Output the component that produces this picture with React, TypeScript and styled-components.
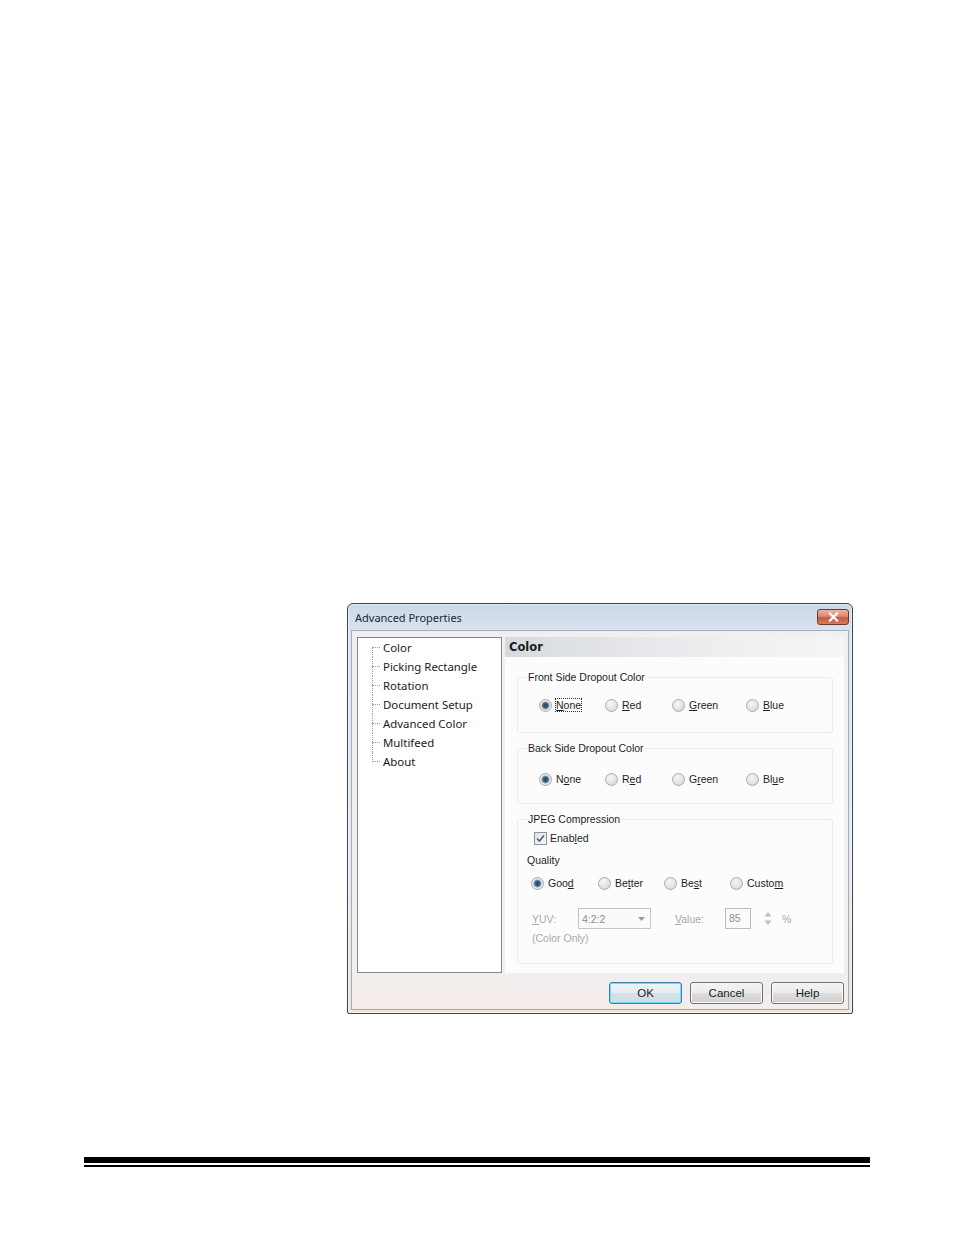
import React from "react";
import styled, { createGlobalStyle } from "styled-components";

const GlobalStyle = createGlobalStyle`
  html, body {
    margin: 0;
    padding: 0;
    background: #fff;
  }
  body {
    font-family: "Liberation Sans", Arial, sans-serif;
  }
  * {
    box-sizing: border-box;
  }
`;

const Page = styled.div`
  width: 954px;
  min-height: 1235px;
  display: flex;
  flex-direction: column;
`;

const DialogSlot = styled.div`
  padding: 603px 0 0 347px;
`;

const Window = styled.div`
  width: 506px;
  height: 411px;
  border: 1px solid #3f444c;
  border-radius: 6px 6px 2px 2px;
  background: linear-gradient(180deg, #cad8e9 0%, #dbe5f1 8%, #e3eaf3 60%, #efe3e0 100%);
  box-shadow: inset 0 0 0 1px rgba(255, 255, 255, 0.55);
  display: flex;
  flex-direction: column;
`;

const TitleBar = styled.div`
  height: 26px;
  display: flex;
  align-items: center;
  justify-content: space-between;
  padding: 0 3px 0 7px;
`;

const Title = styled.span`
  font-family: "Noto Sans", "Liberation Sans", sans-serif;
  font-size: 11px;
  color: #1c2733;
`;

const CloseButton = styled.div`
  width: 32px;
  height: 16px;
  margin-top: -1px;
  border: 1px solid #6b3a30;
  border-radius: 3px;
  background: linear-gradient(180deg, #eab4a2 0%, #dd8a70 45%, #c9593c 55%, #d67b5f 100%);
  display: flex;
  align-items: center;
  justify-content: center;
`;

const Client = styled.div`
  margin: 0 3px 3px 3px;
  flex: 1;
  border: 1px solid #a6adb6;
  background: linear-gradient(180deg, #f0f0f0 0%, #f0f0f0 88%, #f4ece9 100%);
  padding: 6px 4px 5px 5px;
  display: flex;
  flex-direction: column;
`;

const Main = styled.div`
  display: flex;
  gap: 3px;
  height: 336px;
`;

const Tree = styled.ul`
  width: 145px;
  margin: 0;
  padding: 0;
  list-style: none;
  border: 1px solid #828790;
  background: #fff;
`;

const TreeItem = styled.li<{ $first?: boolean; $last?: boolean }>`
  position: relative;
  height: 19px;
  line-height: 19px;
  padding-left: 25px;
  font-family: "Noto Sans", "Liberation Sans", sans-serif;
  font-size: 11.4px;
  color: #1a1a1a;

  &::before {
    content: "";
    position: absolute;
    left: 14px;
    top: 9px;
    width: 8px;
    border-top: 1px dotted #9a9a9a;
  }

  &::after {
    content: "";
    position: absolute;
    left: 14px;
    top: ${({ $first }) => ($first ? "9px" : "0")};
    height: ${({ $first, $last }) => ($first ? "10px" : $last ? "10px" : "19px")};
    border-left: 1px dotted #9a9a9a;
  }
`;

const RightPanel = styled.div`
  flex: 1;
  display: flex;
  flex-direction: column;
`;

const PanelHeader = styled.div`
  height: 20px;
  line-height: 20px;
  padding-left: 4px;
  font-family: "DejaVu Sans", "Liberation Sans", sans-serif;
  font-weight: bold;
  font-size: 11.5px;
  color: #1b1b1b;
  background: linear-gradient(90deg, #d6dade 0%, #e6e8eb 40%, #f0f1f2 75%, #f5f5f5 100%);
`;

const PanelBody = styled.div`
  flex: 1;
  background: #fcfcfc;
  padding: 13px 0 0 12px;
  display: flex;
  flex-direction: column;
  gap: 8px;
`;

const Group = styled.fieldset<{ $bottom: number }>`
  width: 316px;
  min-width: 0;
  margin: 0;
  padding: 0 0 ${({ $bottom }) => $bottom}px 0;
  border: 1px solid #ebebeb;
  border-radius: 3px;
`;

const Legend = styled.legend`
  margin-left: 9px;
  padding: 0 1px;
  font-size: 10.5px;
  line-height: 14px;
  color: #1e1e1e;
`;

const RadioRow = styled.div<{ $cols: string; $indent: number; $top: number }>`
  display: grid;
  grid-template-columns: ${({ $cols }) => $cols};
  padding-left: ${({ $indent }) => $indent}px;
  margin-top: ${({ $top }) => $top}px;
  height: 16px;
  align-items: center;
`;

const Option = styled.label`
  display: flex;
  align-items: center;
  gap: 4px;
  font-size: 10.5px;
  color: #1e1e1e;
  white-space: nowrap;
`;

const RadioDot = styled.span<{ $checked?: boolean }>`
  width: 13px;
  height: 13px;
  flex: none;
  border-radius: 50%;
  border: 1px solid #a9acb0;
  background: ${({ $checked }) =>
    $checked
      ? "radial-gradient(circle, #24435f 0, #3d6283 2.5px, #8fa7bd 3.6px, #e9ecef 4.4px, #d2d6da 100%)"
      : "radial-gradient(circle at 40% 35%, #f6f6f6 0, #e2e4e6 55%, #c8ccd0 100%)"};
`;

const Focus = styled.span`
  outline: 1px dotted #333;
  outline-offset: 0;
`;

const Key = styled.u`
  text-decoration-thickness: 1px;
  text-underline-offset: 1px;
`;

const CheckRow = styled.label`
  display: flex;
  align-items: center;
  gap: 3px;
  height: 16px;
  margin-top: 4px;
  padding-left: 16px;
  font-size: 10.5px;
  color: #1e1e1e;
`;

const CheckBox = styled.span`
  width: 13px;
  height: 13px;
  border: 1px solid #8e9195;
  background: linear-gradient(135deg, #dfe2e5, #f7f8f9);
  display: flex;
  align-items: center;
  justify-content: center;
`;

const SubLabel = styled.div<{ $top: number; $indent: number; $muted?: boolean }>`
  margin-top: ${({ $top }) => $top}px;
  padding-left: ${({ $indent }) => $indent}px;
  height: 14px;
  line-height: 14px;
  font-size: 10.5px;
  color: ${({ $muted }) => ($muted ? "#a9a9a9" : "#1e1e1e")};
`;

const SettingsRow = styled.div`
  margin-top: 17px;
  padding-left: 14px;
  height: 21px;
  display: flex;
  align-items: center;
  font-size: 10.5px;
  color: #a9a9a9;
`;

const FieldLabel = styled.span<{ $width: number }>`
  width: ${({ $width }) => $width}px;
  flex: none;
`;

const Select = styled.div`
  width: 73px;
  height: 21px;
  border: 1px solid #c6c6c6;
  background: #fafafa;
  display: flex;
  align-items: center;
  justify-content: space-between;
  padding: 0 5px 0 3px;
  color: #8d8d8d;
  margin-right: 24px;
`;

const ValueBox = styled.div`
  width: 26px;
  height: 21px;
  border: 1px solid #bcbcbc;
  background: #fbfbfb;
  padding-left: 3px;
  line-height: 19px;
  color: #8d8d8d;
  margin-right: 9px;
`;

const Spinner = styled.div`
  width: 16px;
  height: 21px;
  margin-right: 6px;
  display: flex;
  align-items: center;
  justify-content: center;
`;

const ButtonRow = styled.div`
  margin-top: 9px;
  display: flex;
  justify-content: flex-end;
  gap: 8px;
`;

const Button = styled.button<{ $default?: boolean }>`
  width: 73px;
  height: 22px;
  padding: 0;
  border-radius: 3px;
  font-family: "Liberation Sans", Arial, sans-serif;
  font-size: 11.5px;
  color: #1b1b1b;
  border: 1px solid ${({ $default }) => ($default ? "#3c7fb1" : "#707070")};
  background: ${({ $default }) =>
    $default
      ? "linear-gradient(180deg, #eef4f8 0%, #e5edf2 50%, #d5e2ea 51%, #cfdde6 100%)"
      : "linear-gradient(180deg, #f4f4f4 0%, #ebebeb 50%, #dddddd 51%, #d0d0d0 100%)"};
  box-shadow: inset 0 0 0 1px ${({ $default }) => ($default ? "#6fdaf9" : "#fbfbfb")};
`;

const Rule = styled.div`
  margin: 143px 0 0 84px;
  width: 786px;
  height: 10px;
  border-top: 6px solid #000;
  border-bottom: 2px solid #000;
`;

const treeItems = [
  "Color",
  "Picking Rectangle",
  "Rotation",
  "Document Setup",
  "Advanced Color",
  "Multifeed",
  "About",
];

const dropoutCols = "66px 67px 74px auto";
const qualityCols = "67px 66px 66px auto";

const App = () => {
  return (
    <Page>
      <GlobalStyle />
      <DialogSlot>
        <Window>
          <TitleBar>
            <Title>Advanced Properties</Title>
            <CloseButton>
              <svg width="11" height="10" viewBox="0 0 11 10">
                <path
                  d="M2 1.5 L9 8.5 M9 1.5 L2 8.5"
                  stroke="#fff"
                  strokeWidth="2.2"
                  strokeLinecap="square"
                />
              </svg>
            </CloseButton>
          </TitleBar>
          <Client>
            <Main>
              <Tree>
                {treeItems.map((item, i) => (
                  <TreeItem
                    key={item}
                    $first={i === 0}
                    $last={i === treeItems.length - 1}
                  >
                    {item}
                  </TreeItem>
                ))}
              </Tree>
              <RightPanel>
                <PanelHeader>Color</PanelHeader>
                <PanelBody>
                  <Group $bottom={19}>
                    <Legend>Front Side Dropout Color</Legend>
                    <RadioRow $cols={dropoutCols} $indent={21} $top={13}>
                      <Option>
                        <RadioDot $checked />
                        <Focus>
                          <Key>N</Key>one
                        </Focus>
                      </Option>
                      <Option>
                        <RadioDot />
                        <span>
                          <Key>R</Key>ed
                        </span>
                      </Option>
                      <Option>
                        <RadioDot />
                        <span>
                          <Key>G</Key>reen
                        </span>
                      </Option>
                      <Option>
                        <RadioDot />
                        <span>
                          <Key>B</Key>lue
                        </span>
                      </Option>
                    </RadioRow>
                  </Group>

                  <Group $bottom={16}>
                    <Legend>Back Side Dropout Color</Legend>
                    <RadioRow $cols={dropoutCols} $indent={21} $top={16}>
                      <Option>
                        <RadioDot $checked />
                        <span>
                          N<Key>o</Key>ne
                        </span>
                      </Option>
                      <Option>
                        <RadioDot />
                        <span>
                          R<Key>e</Key>d
                        </span>
                      </Option>
                      <Option>
                        <RadioDot />
                        <span>
                          G<Key>r</Key>een
                        </span>
                      </Option>
                      <Option>
                        <RadioDot />
                        <span>
                          Bl<Key>u</Key>e
                        </span>
                      </Option>
                    </RadioRow>
                  </Group>

                  <Group $bottom={18}>
                    <Legend>JPEG Compression</Legend>
                    <CheckRow>
                      <CheckBox>
                        <svg width="9" height="9" viewBox="0 0 9 9">
                          <path
                            d="M1 4.5 L3.5 7 L8 1.5"
                            fill="none"
                            stroke="#4a5d73"
                            strokeWidth="1.6"
                          />
                        </svg>
                      </CheckBox>
                      <span>
                        Enab<Key>l</Key>ed
                      </span>
                    </CheckRow>
                    <SubLabel $top={7} $indent={9}>
                      Quality
                    </SubLabel>
                    <RadioRow $cols={qualityCols} $indent={13} $top={8}>
                      <Option>
                        <RadioDot $checked />
                        <span>
                          Goo<Key>d</Key>
                        </span>
                      </Option>
                      <Option>
                        <RadioDot />
                        <span>
                          Be<Key>t</Key>ter
                        </span>
                      </Option>
                      <Option>
                        <RadioDot />
                        <span>
                          Be<Key>s</Key>t
                        </span>
                      </Option>
                      <Option>
                        <RadioDot />
                        <span>
                          Custo<Key>m</Key>
                        </span>
                      </Option>
                    </RadioRow>
                    <SettingsRow>
                      <FieldLabel $width={46}>
                        <Key>Y</Key>UV:
                      </FieldLabel>
                      <Select>
                        <span>4:2:2</span>
                        <svg width="7" height="4" viewBox="0 0 7 4">
                          <path d="M0 0 L7 0 L3.5 4 Z" fill="#9a9a9a" />
                        </svg>
                      </Select>
                      <FieldLabel $width={50}>
                        <Key>V</Key>alue:
                      </FieldLabel>
                      <ValueBox>85</ValueBox>
                      <Spinner>
                        <svg width="12" height="17" viewBox="0 0 12 17">
                          <path d="M6 2 L9.5 6.5 L2.5 6.5 Z" fill="#bdbdbd" />
                          <path d="M2.5 10.5 L9.5 10.5 L6 15 Z" fill="#bdbdbd" />
                        </svg>
                      </Spinner>
                      <span>%</span>
                    </SettingsRow>
                    <SubLabel $top={2} $indent={14} $muted>
                      (Color Only)
                    </SubLabel>
                  </Group>
                </PanelBody>
              </RightPanel>
            </Main>
            <ButtonRow>
              <Button $default>OK</Button>
              <Button>Cancel</Button>
              <Button>Help</Button>
            </ButtonRow>
          </Client>
        </Window>
      </DialogSlot>
      <Rule />
    </Page>
  );
};

export default App;
